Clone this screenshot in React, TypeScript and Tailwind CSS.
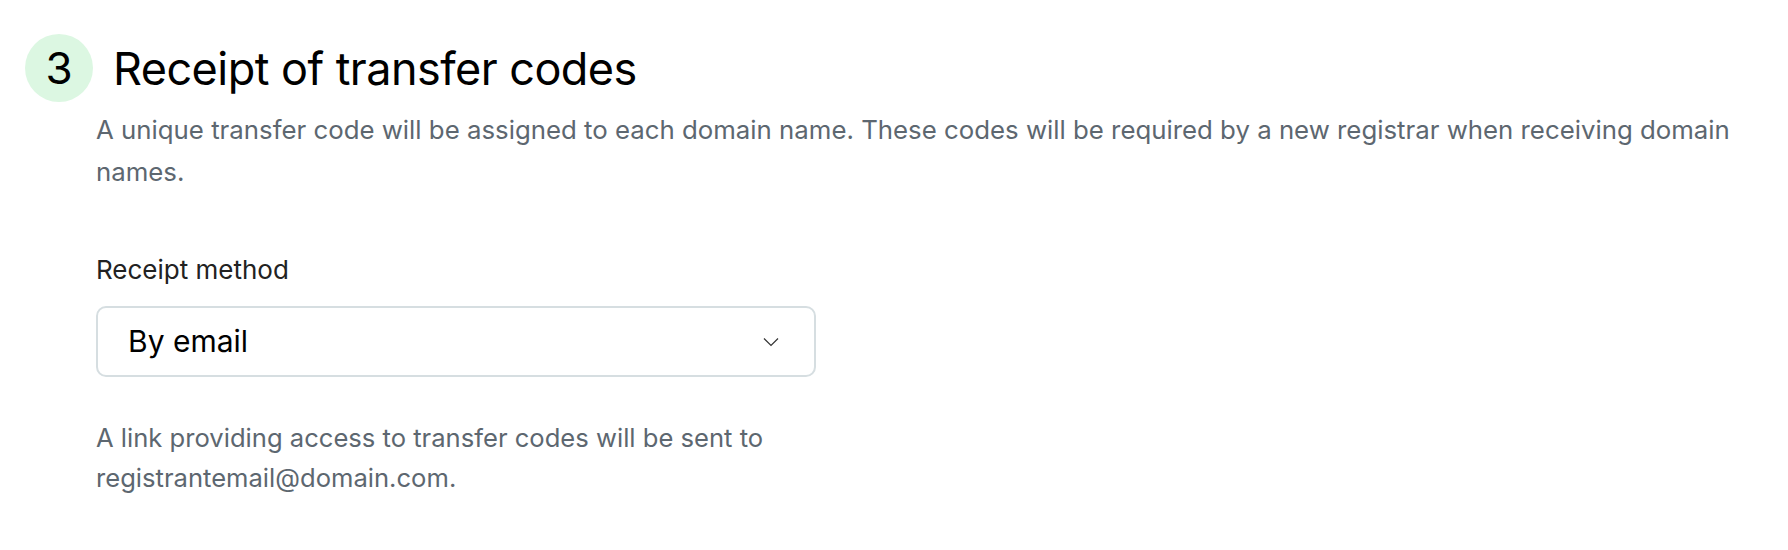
import React from "react";

const App: React.FC = () => {
  return (
    <div
      className="min-h-[550px] w-full bg-white pl-[25px] pt-[34px]"
      style={{ fontFamily: "Inter, 'Noto Sans', sans-serif" }}
    >
      <div className="flex items-center gap-[20px]">
        <div className="flex h-[68px] w-[68px] items-center justify-center rounded-full bg-[#dcf7e2] text-[44px] text-black">
          3
        </div>
        <h2 className="text-[45px] font-normal leading-none tracking-[-0.012em] text-black">
          Receipt of transfer codes
        </h2>
      </div>

      <div className="pl-[71px]">
        <p className="mt-[7px] max-w-[1665px] text-[25.8px] leading-[42px] text-[#5d6770]">
          A unique transfer code will be assigned to each domain name. These
          codes will be required by a new registrar when receiving domain names.
        </p>

        <label className="mt-[61px] block text-[26px] leading-[32px] text-[#222]">
          Receipt method
        </label>

        <div className="mt-[20px] flex h-[71px] w-[720px] items-center justify-between rounded-[10px] border-2 border-[#d6dee1] pl-[30px] pr-[35px]">
          <span className="text-[30px] text-black">By email</span>
          <svg
            width="16"
            height="10"
            viewBox="0 0 16 10"
            fill="none"
            stroke="#333"
            strokeWidth="1.2"
          >
            <path d="M1 1.5l7 7 7-7" />
          </svg>
        </div>

        <p className="mt-[41px] w-[720px] text-[25.6px] leading-[40px] text-[#5d6770]">
          A link providing access to transfer codes will be sent to
          registrantemail@domain.com.
        </p>
      </div>
    </div>
  );
};

export default App;
